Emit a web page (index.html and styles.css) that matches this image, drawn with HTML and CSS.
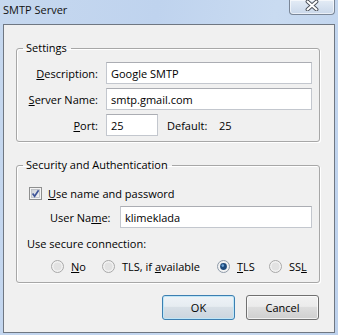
FILE: index.html
```html
<!DOCTYPE html>
<html lang="en">
<head>
    <meta charset="UTF-8">
    <title>SMTP Server</title>
    <link rel="stylesheet" href="styles.css">
</head>
<body>
    <div class="window">
        <div class="titlebar">
            <span class="title">SMTP Server</span>
            <span class="close-btn">
                <svg width="14" height="11" viewBox="0 0 14 11">
                    <path d="M2.5 1.5 L11.5 9.5 M11.5 1.5 L2.5 9.5" stroke="#4a4f58" stroke-width="3.8" stroke-linecap="round"/>
                    <path d="M2.5 1.5 L11.5 9.5 M11.5 1.5 L2.5 9.5" stroke="#ffffff" stroke-width="2" stroke-linecap="round"/>
                </svg>
            </span>
        </div>

        <div class="dialog">
            <!-- Settings -->
            <fieldset class="group settings">
                <legend>Settings</legend>
                <div class="form-grid">
                    <label><u>D</u>escription:</label>
                    <input class="field" type="text" value="Google SMTP">
                    <label><u>S</u>erver Name:</label>
                    <input class="field" type="text" value="smtp.gmail.com">
                    <label><u>P</u>ort:</label>
                    <div class="port-row">
                        <input class="field port" type="text" value="25">
                        <span class="default-label">Default:</span>
                        <span>25</span>
                    </div>
                </div>
            </fieldset>

            <!-- Security and Authentication -->
            <fieldset class="group security">
                <legend>Security and Authentication</legend>
                <div class="security-body">
                    <div class="check-row">
                        <svg class="checkbox" width="13" height="13" viewBox="0 0 13 13">
                            <defs>
                                <linearGradient id="cbFill" x1="0" y1="0" x2="1" y2="1">
                                    <stop offset="0" stop-color="#cbcfd5"/>
                                    <stop offset="1" stop-color="#f6f6f6"/>
                                </linearGradient>
                            </defs>
                            <rect x="0.5" y="0.5" width="12" height="12" fill="#f4f4f4" stroke="#8e8f8f"/>
                            <rect x="2.5" y="2.5" width="8" height="8" fill="url(#cbFill)" stroke="#b9bcc2" stroke-width="0.8"/>
                            <path d="M3.6 6.4 L5.6 9.2 L9.6 3.2" fill="none" stroke="#3f5598" stroke-width="1.7"/>
                        </svg>
                        <span><u>U</u>se name and password</span>
                    </div>
                    <div class="user-row">
                        <label class="user-label">User Na<u>m</u>e:</label>
                        <input class="field user" type="text" value="klimeklada">
                    </div>
                    <div class="secure-label">Use secure connection:</div>
                    <div class="radio-row">
                        <div class="radio-item item-no">
                            <svg class="radio" width="13" height="13" viewBox="0 0 13 13">
                                <circle cx="6.5" cy="6.5" r="6" fill="#f2f2f2" stroke="#a8a8a8"/>
                                <circle cx="6.5" cy="6.5" r="4" fill="#e2e2e2"/>
                            </svg>
                            <span><u>N</u>o</span>
                        </div>
                        <div class="radio-item item-tlsa">
                            <svg class="radio" width="13" height="13" viewBox="0 0 13 13">
                                <circle cx="6.5" cy="6.5" r="6" fill="#f2f2f2" stroke="#a8a8a8"/>
                                <circle cx="6.5" cy="6.5" r="4" fill="#e2e2e2"/>
                            </svg>
                            <span>TLS, if <u>a</u>vailable</span>
                        </div>
                        <div class="radio-item item-tls">
                            <svg class="radio" width="13" height="13" viewBox="0 0 13 13">
                                <circle cx="6.5" cy="6.5" r="6" fill="#f2f2f2" stroke="#8e9aa8"/>
                                <circle cx="6.5" cy="6.5" r="3.4" fill="#1d4a7c"/>
                                <circle cx="5.8" cy="5.6" r="1.3" fill="#6ea5d8"/>
                            </svg>
                            <span><u>T</u>LS</span>
                        </div>
                        <div class="radio-item">
                            <svg class="radio" width="13" height="13" viewBox="0 0 13 13">
                                <circle cx="6.5" cy="6.5" r="6" fill="#f2f2f2" stroke="#a8a8a8"/>
                                <circle cx="6.5" cy="6.5" r="4" fill="#e2e2e2"/>
                            </svg>
                            <span>SS<u>L</u></span>
                        </div>
                    </div>
                </div>
            </fieldset>

            <div class="buttons">
                <button class="btn default">OK</button>
                <button class="btn">Cancel</button>
            </div>
        </div>
    </div>
</body>
</html>
```

FILE: styles.css
```css
body {
    margin: 0;
    width: 338px;
    height: 335px;
    overflow: hidden;
    font-family: "Open Sans", "Noto Sans", sans-serif;
    font-size: 11px;
    color: #000;
    background: linear-gradient(100deg, #c6d8ef 0%, #bfd3ee 40%, #c9dbf1 70%, #bdd1ec 100%);
}
.window {
    display: flex;
    flex-direction: column;
    height: 335px;
}
.titlebar {
    height: 24px;
    display: flex;
    justify-content: space-between;
    align-items: flex-start;
}
.title {
    padding: 2px 0 0 3px;
    line-height: 16px;
    color: #111;
}
.close-btn {
    width: 46px;
    height: 15px;
    margin-right: 3px;
    box-sizing: border-box;
    border: 1px solid #7a8697;
    border-top: none;
    border-radius: 0 0 4px 4px;
    background: linear-gradient(#e4ecf6, #c9d7ea);
    box-shadow: inset 0 0 0 1px rgba(255, 255, 255, 0.6);
    display: flex;
    justify-content: center;
    align-items: flex-start;
}
.dialog {
    box-sizing: border-box;
    width: 332px;
    height: 309px;
    margin-left: 3px;
    border: 1px solid #6f7782;
    background-color: #f0f0f0;
}
.group {
    box-sizing: border-box;
    width: 304px;
    min-width: 0;
    margin: 15px 0 0 12px;
    border: 1px solid #a7a7a7;
    border-radius: 3px;
    box-shadow: inset 1px 1px 0 #fff, 1px 1px 0 #fff;
}
.group legend {
    margin-left: 6px;
    padding: 0 4px 0 3px;
    line-height: 16px;
}
.settings {
    padding: 6px 7px 5px 0;
}
.form-grid {
    display: grid;
    grid-template-columns: 81px 206px;
    column-gap: 8px;
    row-gap: 4px;
}
.form-grid label {
    text-align: right;
    align-self: center;
}
.field {
    box-sizing: border-box;
    height: 22px;
    margin: 0;
    padding: 0 4px;
    border: 1px solid #c3c7ce;
    border-top-color: #abadb3;
    background: #fff;
    font-family: inherit;
    font-size: 11px;
    color: #000;
    outline: none;
}
.port-row {
    display: flex;
    align-items: center;
}
.port {
    width: 52px;
}
.default-label {
    margin-left: 9px;
    width: 52px;
}
.security {
    padding: 12px 7px 8px 0;
}
.security-body {
    padding-left: 10px;
}
.check-row {
    display: flex;
    align-items: center;
    height: 16px;
    margin-left: 2px;
}
.checkbox {
    margin-right: 6px;
}
.user-row {
    display: flex;
    align-items: center;
    margin: 5px 0 0 23px;
}
.user-label {
    width: 70px;
}
.user {
    width: 192px;
}
.secure-label {
    margin-top: 8px;
    line-height: 16px;
}
.radio-row {
    display: flex;
    align-items: center;
    height: 16px;
    margin: 6px 0 0 24px;
}
.radio-item {
    display: flex;
    align-items: center;
}
.radio {
    margin-right: 7px;
}
.item-no {
    width: 51px;
}
.item-tlsa {
    width: 115px;
}
.item-tls {
    width: 52px;
}
.buttons {
    display: flex;
    justify-content: flex-end;
    gap: 11px;
    margin-top: 12px;
    padding-right: 15px;
}
.btn {
    box-sizing: border-box;
    width: 73px;
    height: 25px;
    margin: 0;
    padding: 0;
    border: 1px solid #707070;
    border-radius: 3px;
    background: linear-gradient(#f2f2f2 0%, #ebebeb 45%, #dddddd 50%, #cfcfcf 100%);
    box-shadow: inset 0 0 0 1px rgba(255, 255, 255, 0.7);
    font-family: inherit;
    font-size: 11px;
    color: #000;
}
.btn.default {
    border-color: #3c7fb1;
    background: linear-gradient(#eef3f7 0%, #e6ecf1 45%, #d7dfe6 50%, #cbd5de 100%);
    box-shadow: inset 0 0 0 1px #bfe6f7;
}
```
